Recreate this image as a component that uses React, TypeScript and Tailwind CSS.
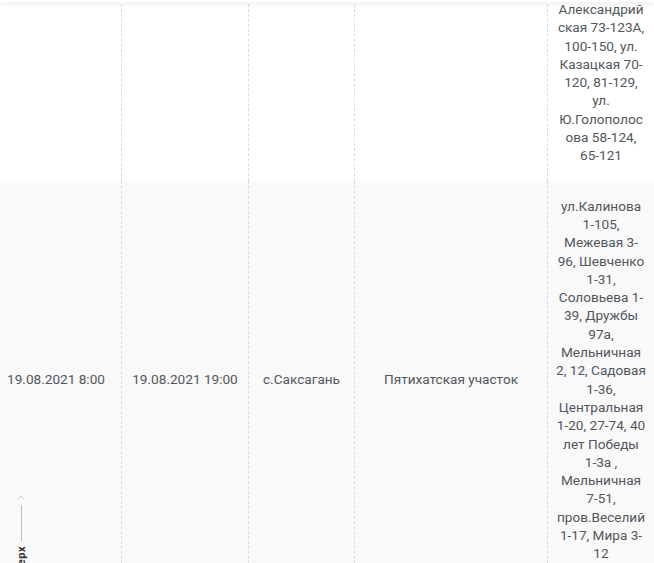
const rows = [
  {
    start: "",
    end: "",
    place: "",
    area: "",
    streets: [
      "Александрий",
      "ская 73-123А,",
      "100-150, ул.",
      "Казацкая 70-",
      "120, 81-129,",
      "ул.",
      "Ю.Голополос",
      "ова 58-124,",
      "65-121",
    ],
    bg: "bg-white",
  },
  {
    start: "19.08.2021 8:00",
    end: "19.08.2021 19:00",
    place: "с.Саксагань",
    area: "Пятихатская участок",
    streets: [
      "ул.Калинова",
      "1-105,",
      "Межевая 3-",
      "96, Шевченко",
      "1-31,",
      "Соловьева 1-",
      "39, Дружбы",
      "97а,",
      "Мельничная",
      "2, 12, Садовая",
      "1-36,",
      "Центральная",
      "1-20, 27-74, 40",
      "лет Победы",
      "1-3а ,",
      "Мельничная",
      "7-51,",
      "пров.Веселий",
      "1-17, Мира 3-",
      "12",
    ],
    bg: "bg-[#f9f9f9]",
  },
];

function Cell({ children, last = false }: { children?: React.ReactNode; last?: boolean }) {
  return (
    <div
      className={`flex items-center justify-center py-4 px-1 text-center ${
        last ? "" : "border-r border-dashed border-[#dcdcdc]"
      }`}
    >
      <div>{children}</div>
    </div>
  );
}

export default function App() {
  return (
    <div className="relative h-[563px] w-[654px] overflow-hidden bg-white font-['Roboto',sans-serif] text-[13.6px] leading-[18.3px] text-[#52575c]">
      <div className="-mt-4 -ml-[9px] w-[663px]">
        {rows.map((r, i) => (
          <div key={i} className={`grid grid-cols-[131px_127px_106px_193px_106px] ${r.bg}`}>
            <Cell>{r.start}</Cell>
            <Cell>{r.end}</Cell>
            <Cell>{r.place}</Cell>
            <Cell>{r.area}</Cell>
            <Cell last>
              {r.streets.map((line, j) => (
                <span key={j} className="block whitespace-nowrap">
                  {line}
                </span>
              ))}
            </Cell>
          </div>
        ))}
      </div>

      {/* header shadow */}
      <div className="absolute top-0 left-0 h-[2px] w-full bg-white shadow-[0_2px_4px_rgba(0,0,0,0.13)]" />

      {/* scroll to top */}
      <div className="absolute top-[495px] left-[15px] flex w-[12px] flex-col items-center gap-[5px]">
        <svg width="8" height="5" viewBox="0 0 8 5" fill="none">
          <path d="M0.5 4.5 L4 1 L7.5 4.5" stroke="#c8c8c8" strokeWidth="1" />
        </svg>
        <div className="h-[36px] w-px bg-[#bdbdbd]" />
        <span className="rotate-180 text-[11px] font-bold leading-none tracking-[0.5px] text-[#333] [writing-mode:vertical-rl]">
          Наверх
        </span>
      </div>
    </div>
  );
}
